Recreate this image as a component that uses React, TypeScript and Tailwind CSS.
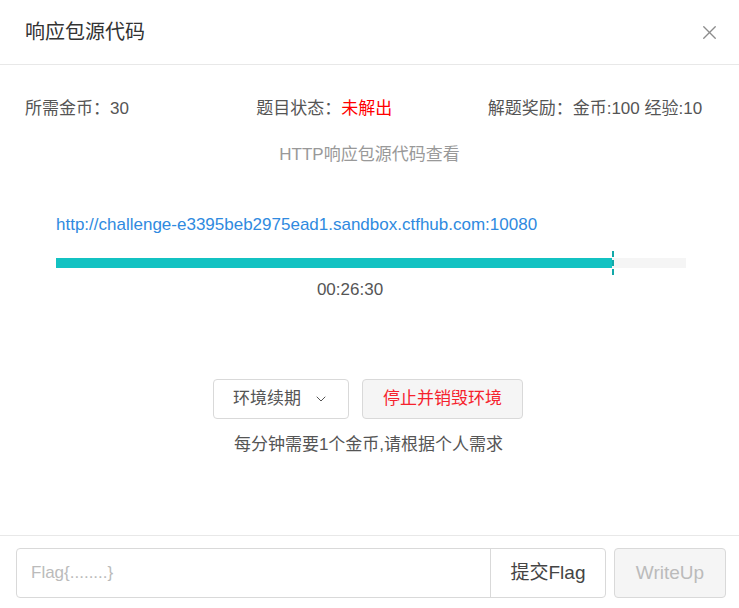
import { X, ChevronDown } from "lucide-react";

const font = { fontFamily: '"Liberation Sans", "Noto Sans CJK SC", sans-serif' };

export default function App() {
  const percent = 88.3;

  return (
    <div className="w-[739px] h-[608px] bg-white flex flex-col text-[#555]" style={font}>
      {/* Header */}
      <div className="h-[65px] shrink-0 flex items-center justify-between pl-[25px] pr-[18px] border-b border-[#e8e8e8]">
        <h2 className="text-[20px] text-[#333]">响应包源代码</h2>
        <X className="w-[23px] h-[23px] text-[#8c8c8c]" strokeWidth={1.4} />
      </div>

      {/* Body */}
      <div className="flex-1 flex flex-col">
        <div className="grid grid-cols-3 pl-[25px] pr-[20px] mt-[32px] text-[17px] leading-[24px]">
          <span>所需金币：30</span>
          <span>
            题目状态：<span className="text-[#f00]">未解出</span>
          </span>
          <span className="whitespace-nowrap">解题奖励：金币:100 经验:10</span>
        </div>

        <p className="text-center text-[17px] leading-[24px] text-[#999] mt-[22px]">HTTP响应包源代码查看</p>

        <div className="pl-[56px] pr-[53px] mt-[46px]">
          <a className="text-[17px] leading-[24px] text-[#2f8ae0]">
            http://challenge-e3395beb2975ead1.sandbox.ctfhub.com:10080
          </a>
          <div className="mt-[14px] relative h-[24px] flex items-center">
            <div className="w-full h-[10px] bg-[#f5f5f5]">
              <div className="h-full bg-[#13c2c2]" style={{ width: `${percent}%` }} />
            </div>
            <div
              className="absolute top-0 bottom-0 border-l-2 border-dashed border-[#13a8a8]"
              style={{ left: `${percent}%` }}
            />
          </div>
          <p className="text-center text-[17px] leading-[24px] mt-[3px] pr-[42px]">00:26:30</p>
        </div>

        <div className="flex items-center justify-center gap-[13px] mt-[77px] pr-[3px]">
          <button className="h-[40px] px-[19px] flex items-center gap-[12px] border border-[#d9d9d9] rounded bg-white text-[17px] text-[#555]">
            环境续期
            <ChevronDown className="w-[16px] h-[16px] text-[#555]" strokeWidth={1.5} />
          </button>
          <button className="h-[40px] px-[20px] border border-[#d9d9d9] rounded bg-[#f5f5f5] text-[17px] text-[#f5222d]">
            停止并销毁环境
          </button>
        </div>
        <p className="text-center text-[17px] leading-[24px] mt-[14px] pr-[2px]">每分钟需要1个金币,请根据个人需求</p>
      </div>

      {/* Footer */}
      <div className="h-[73px] shrink-0 border-t border-[#e8e8e8] flex items-start pt-[12px] pl-[16px] pr-[13px] gap-[8px]">
        <div className="flex flex-1 h-[50px] border border-[#d9d9d9] rounded">
          <input
            className="flex-1 min-w-0 px-[14px] text-[17px] outline-none placeholder:text-[#bbb] bg-transparent"
            placeholder="Flag{........}"
          />
          <button className="w-[115px] border-l border-[#d9d9d9] text-[19px] text-[#444]">提交Flag</button>
        </div>
        <button
          disabled
          className="w-[112px] h-[50px] border border-[#d9d9d9] rounded bg-[#f5f5f5] text-[19px] text-[#bbb]"
        >
          WriteUp
        </button>
      </div>
    </div>
  );
}
